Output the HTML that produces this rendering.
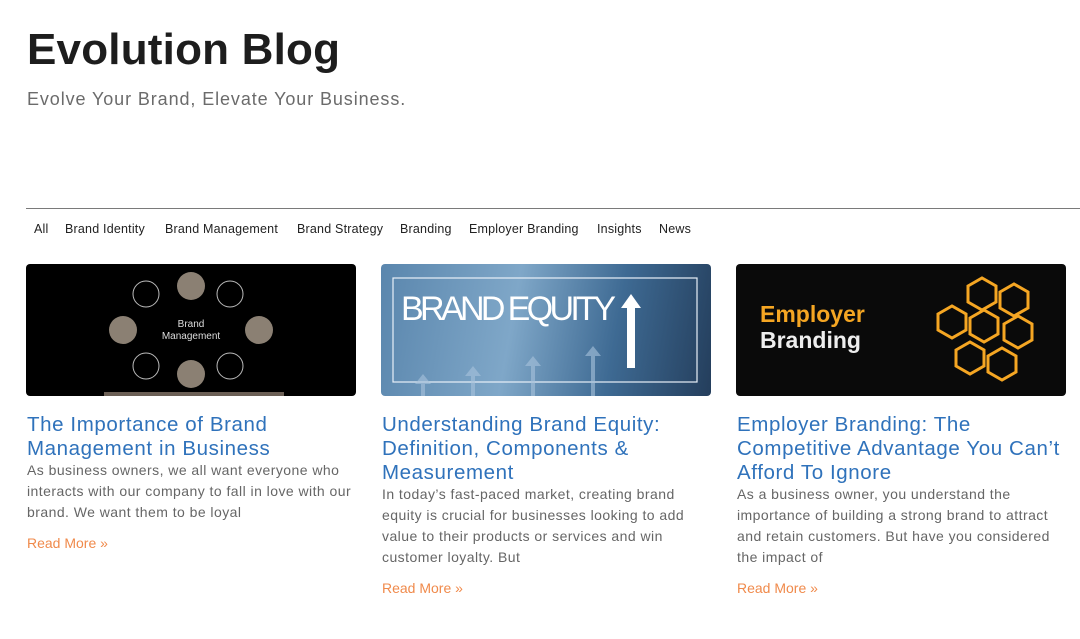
<!DOCTYPE html>
<html><head><meta charset="utf-8"><style>
body{margin:0;width:1080px;height:639px;background:#fff;font-family:"Liberation Sans",sans-serif;overflow:hidden;position:relative}
.a{position:absolute;white-space:nowrap}
h1{position:absolute;left:27px;top:25px;margin:0;font-size:44px;font-weight:bold;color:#1d1d1d;letter-spacing:0.2px}
.sub{left:27px;top:89px;font-size:18px;color:#6b6b6b;letter-spacing:0.9px}
.hr{position:absolute;left:26px;top:208px;width:1054px;height:1px;background:#7a7a7a}
.nav{top:222px;font-size:12.5px;color:#222;letter-spacing:0.2px}
.img{position:absolute;top:264px;width:330px;height:132px;border-radius:4px;overflow:hidden}
.t{position:absolute;font-size:20.5px;line-height:24px;color:#2f72bb;white-space:nowrap;letter-spacing:0.6px}
.e{position:absolute;font-size:14px;line-height:21px;color:#666;white-space:nowrap;letter-spacing:0.45px}
.r{position:absolute;font-size:14px;color:#f08a4b}
</style></head><body>
<h1>Evolution Blog</h1>
<div class="a sub">Evolve Your Brand, Elevate Your Business.</div>
<div class="hr"></div>
<div class="a nav" style="left:34px">All</div>
<div class="a nav" style="left:65px">Brand Identity</div>
<div class="a nav" style="left:165px">Brand Management</div>
<div class="a nav" style="left:297px">Brand Strategy</div>
<div class="a nav" style="left:400px">Branding</div>
<div class="a nav" style="left:469px">Employer Branding</div>
<div class="a nav" style="left:597px">Insights</div>
<div class="a nav" style="left:659px">News</div>

<div class="img" style="left:26px;background:#000">
<svg width="330" height="132" viewBox="0 0 330 132">
<g fill="none" stroke="#bbb" stroke-width="1">
<circle cx="120" cy="30" r="13"/><circle cx="204" cy="30" r="13"/><circle cx="120" cy="102" r="13"/><circle cx="204" cy="102" r="13"/></g>
<g fill="#8b8073"><circle cx="165" cy="22" r="14"/><circle cx="97" cy="66" r="14"/><circle cx="233" cy="66" r="14"/><circle cx="165" cy="110" r="14"/></g>
<text x="165" y="63" fill="#ddd" font-size="10" text-anchor="middle" font-family="Liberation Sans">Brand</text>
<text x="165" y="75" fill="#ddd" font-size="10" text-anchor="middle" font-family="Liberation Sans">Management</text>
<rect x="78" y="128" width="180" height="4" fill="#6b5f55"/>
</svg></div>

<div class="img" style="left:381px;background:linear-gradient(100deg,#5a86ad 0%,#7fa7c8 40%,#3e6a93 70%,#243e5c 100%)">
<svg width="330" height="132" viewBox="0 0 330 132">
<rect x="12" y="14" width="304" height="104" fill="none" stroke="#e8f0f8" stroke-width="1.2"/>
<text x="20" y="56" fill="#fff" font-size="34" font-family="Liberation Sans" textLength="215">BRAND EQUITY</text>
<path d="M250 30 l-10 14 h6 v60 h8 v-60 h6z" fill="#fff"/>
<g fill="#a9c4dc" opacity="0.6"><path d="M40 132 v-12 l-6 0 8-10 8 10h-6v12z"/><path d="M90 132 v-20 l-6 0 8-10 8 10h-6v20z"/><path d="M150 132 v-30 l-6 0 8-10 8 10h-6v30z"/><path d="M210 132 v-40 l-6 0 8-10 8 10h-6v40z"/></g>
</svg></div>

<div class="img" style="left:736px;background:#0a0a0a">
<svg width="330" height="132" viewBox="0 0 330 132">
<text x="24" y="58" fill="#f5a623" font-size="23" font-weight="bold" font-family="Liberation Sans">Employer</text>
<text x="24" y="84" fill="#eee" font-size="23" font-weight="bold" font-family="Liberation Sans">Branding</text>
<g fill="none" stroke="#f5a623" stroke-width="3">
<path d="M232 22 l14-8 14 8 v16 l-14 8 -14-8z"/><path d="M264 28 l14-8 14 8 v16 l-14 8 -14-8z"/>
<path d="M202 50 l14-8 14 8 v16 l-14 8 -14-8z"/><path d="M234 54 l14-8 14 8 v16 l-14 8 -14-8z"/><path d="M268 60 l14-8 14 8 v16 l-14 8 -14-8z"/>
<path d="M220 86 l14-8 14 8 v16 l-14 8 -14-8z"/><path d="M252 92 l14-8 14 8 v16 l-14 8 -14-8z"/></g>
</svg></div>

<div class="t" style="left:27px;top:413px">The Importance of Brand<br>Management in Business</div>
<div class="e" style="left:27px;top:460px">As business owners, we all want everyone who<br>interacts with our company to fall in love with our<br>brand. We want them to be loyal</div>
<div class="r" style="left:27px;top:535px">Read More »</div>

<div class="t" style="left:382px;top:413px">Understanding Brand Equity:<br>Definition, Components &amp;<br>Measurement</div>
<div class="e" style="left:382px;top:484px">In today’s fast-paced market, creating brand<br>equity is crucial for businesses looking to add<br>value to their products or services and win<br>customer loyalty. But</div>
<div class="r" style="left:382px;top:580px">Read More »</div>

<div class="t" style="left:737px;top:413px">Employer Branding: The<br>Competitive Advantage You Can’t<br>Afford To Ignore</div>
<div class="e" style="left:737px;top:484px">As a business owner, you understand the<br>importance of building a strong brand to attract<br>and retain customers. But have you considered<br>the impact of</div>
<div class="r" style="left:737px;top:580px">Read More »</div>
</body></html>
